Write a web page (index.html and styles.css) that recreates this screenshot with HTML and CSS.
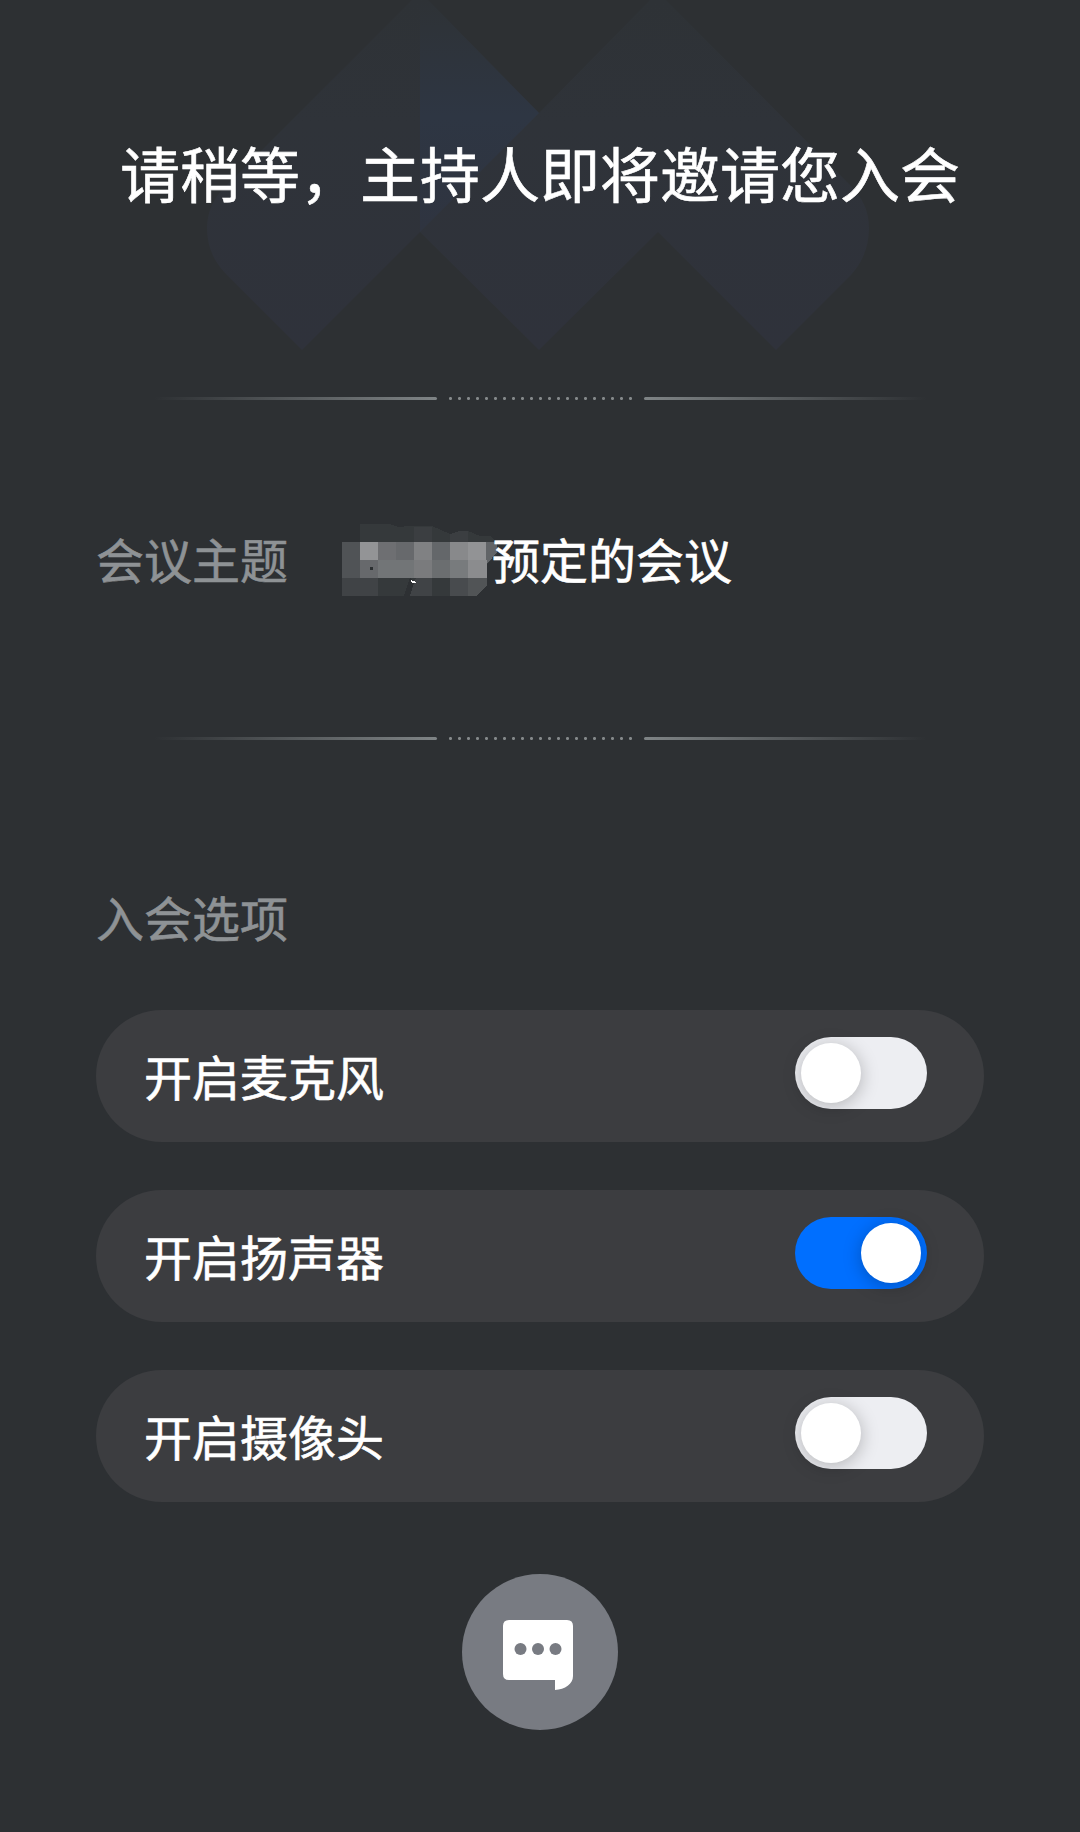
FILE: index.html
```html
<!DOCTYPE html>
<html lang="zh-CN">
<head>
    <meta charset="UTF-8">
    <meta name="viewport" content="width=device-width, initial-scale=1.0">
    <title>等候室</title>
    <link rel="stylesheet" href="styles.css">
</head>
<body>
    <main class="waiting-room">
        <header class="hero">
            <svg class="hero-logo" width="1080" height="360" viewBox="0 0 1080 360">
                <defs>
                    <linearGradient id="logoShade" x1="0" y1="0" x2="0" y2="1">
                        <stop offset="0" stop-color="#2e3236"/>
                        <stop offset="0.35" stop-color="#2f3339"/>
                        <stop offset="1" stop-color="#2f323b"/>
                    </linearGradient>
                    <linearGradient id="foldShade" x1="0" y1="0" x2="0" y2="1">
                        <stop offset="0" stop-color="#2e3236"/>
                        <stop offset="0.5" stop-color="#2e3643"/>
                        <stop offset="1" stop-color="#2f3440"/>
                    </linearGradient>
                </defs>
                <path fill="url(#logoShade)" d="M302 350L226 274Q207 255 207 228Q207 204 226 186L412 0H428L539 113L650 0H666L851 186Q869 204 869 228Q869 255 851 275L776 350L658 232L539 350L420 232Z"/>
                <path fill="url(#foldShade)" d="M420 0H428L539 113L420 232Z"/>
            </svg>
            <h1>请稍等，主持人即将邀请您入会</h1>
        </header>

        <div class="divider">
            <span class="line line-left"></span>
            <span class="dots"></span>
            <span class="line line-right"></span>
        </div>

        <section class="topic">
            <span class="label">会议主题</span>
            <svg class="mosaic" width="158" height="72" viewBox="0 0 158 72" shape-rendering="crispEdges">
                <path fill="#35393b" d="M18 0H48L56 3L68 2H90L108 10L118 7H126L138 12H148L155 18V30L145 40V56L134 72H68L72 58L68 54L62 72H0V18H18Z"/>
                <path fill="#3b3e41" d="M72 3H90V18H72ZM108 10L118 7H126V18H108Z"/>
                <path fill="#505356" d="M0 18H18V54H0Z"/>
                <path fill="#939496" d="M18 18H36V36H18Z"/>
                <path fill="#6e6f72" d="M36 18H54V36H36Z"/>
                <path fill="#67696c" d="M54 18H72V36H54ZM18 36H36V54H18Z"/>
                <path fill="#808183" d="M72 18H90V36H72Z"/>
                <path fill="#64676a" d="M90 18H108V36H90Z"/>
                <path fill="#88898b" d="M108 18H126V36H108Z"/>
                <path fill="#929395" d="M126 18H144V36H126Z"/>
                <path fill="#616467" d="M144 18H155V28L145 40V36H144Z"/>
                <path fill="#727577" d="M36 36H72V54H36Z"/>
                <path fill="#7a7b7d" d="M72 36H90V54H72Z"/>
                <path fill="#6b6e70" d="M90 36H108V54H90Z"/>
                <path fill="#787b7d" d="M108 36H126V54H108Z"/>
                <path fill="#8b8c8e" d="M126 36H145V54H126Z"/>
                <path fill="#404346" d="M0 54H36V72H0ZM74 54H90V72H68Z"/>
                <path fill="#484b4e" d="M108 54H126V72H108Z"/>
                <path fill="#515456" d="M126 54H145V62L134 72H126Z"/>
                <path fill="#2b2f31" d="M28 43H31V46H28Z"/>
                <path fill="#fff" d="M69 56L74 58V59H70Z"/>
            </svg>
            <span class="value">预定的会议</span>
        </section>

        <div class="divider">
            <span class="line line-left"></span>
            <span class="dots"></span>
            <span class="line line-right"></span>
        </div>

        <section class="options">
            <h2 class="label">入会选项</h2>
            <label class="option">
                <span>开启麦克风</span>
                <input class="switch" type="checkbox">
            </label>
            <label class="option">
                <span>开启扬声器</span>
                <input class="switch" type="checkbox" checked>
            </label>
            <label class="option">
                <span>开启摄像头</span>
                <input class="switch" type="checkbox">
            </label>
        </section>

        <button class="chat-button" type="button" aria-label="聊天">
            <svg width="156" height="156" viewBox="0 0 156 156">
                <path fill="#fff" d="M47 46H105Q111 46 111 52V102C111 110 103 115.500 93 116V106H47Q41 106 41 100V52Q41 46 47 46Z"/>
                <circle cx="58.500" cy="75" r="6"/>
                <circle cx="76" cy="75" r="6"/>
                <circle cx="93.500" cy="75" r="6"/>
            </svg>
        </button>
    </main>
</body>
</html>
```
FILE: styles.css
```css
* {
    margin: 0;
    padding: 0;
    box-sizing: border-box;
}

body {
    font-family: 'Noto Sans CJK SC', sans-serif;
    background-color: #2d3033;
    color: #fff;
    -webkit-text-stroke: 0.6px currentColor;
}

.waiting-room {
    height: 1832px;
    display: flex;
    flex-direction: column;
    align-items: center;
    overflow: hidden;
}

.hero {
    position: relative;
    width: 100%;
    height: 397px;
    padding-top: 127px;
    text-align: center;
}

/* faded logo behind the title */
.hero-logo {
    position: absolute;
    top: 0;
    left: 0;
}

h1 {
    position: relative;
    font-size: 60px;
    line-height: 90px;
    font-weight: 400;
    white-space: nowrap;
}

.divider {
    width: 808px;
    height: 3px;
    display: flex;
    justify-content: space-between;
}

.line {
    width: 301px;
    height: 3px;
    border-radius: 2px;
}

.line-left {
    background: linear-gradient(to left, #7f8486, #2d3033 94%);
}

.line-right {
    width: 300px;
    background: linear-gradient(to right, #7f8486, #2d3033 94%);
}

.dots {
    width: 183px;
    height: 3px;
    background: radial-gradient(circle at 1.5px 1.5px, #85898b 1.2px, transparent 1.8px) 0 0 / 9px 3px;
}

.topic {
    width: 100%;
    height: 337px;
    padding: 122px 96px 0;
    display: flex;
    align-items: flex-start;
    font-size: 48px;
    line-height: 72px;
}

.label {
    font-size: 48px;
    line-height: 72px;
    font-weight: 400;
    color: #8e9295;
}

.mosaic {
    margin-top: 2px;
    margin-left: 54px;
}

.value {
    margin-left: -8px;
}

.options {
    width: 888px;
    padding-top: 140px;
    display: flex;
    flex-direction: column;
    gap: 48px;
}

.options .label {
    margin-bottom: 10px;
}

.option {
    height: 132px;
    padding: 0 57px 0 48px;
    display: flex;
    justify-content: space-between;
    align-items: center;
    border-radius: 66px;
    background-color: #3c3d40;
    font-size: 48px;
    line-height: 72px;
}

.option span {
    margin-bottom: 3px;
}

.switch {
    appearance: none;
    width: 132px;
    height: 72px;
    margin-bottom: 6px;
    padding: 6px;
    display: flex;
    border-radius: 36px;
    background-color: #edeef2;
    cursor: pointer;
}

.switch::before {
    content: "";
    width: 60px;
    height: 60px;
    border-radius: 50%;
    background-color: #fff;
    box-shadow: 0 3px 18px rgba(0, 0, 0, 0.25);
}

.switch:checked {
    justify-content: flex-end;
    background-color: #006fff;
}

.chat-button {
    width: 156px;
    height: 156px;
    margin-top: 72px;
    border: none;
    border-radius: 50%;
    background-color: #787b82;
    cursor: pointer;
}

.chat-button svg {
    display: block;
}

.chat-button circle {
    fill: #787b82;
}
```
